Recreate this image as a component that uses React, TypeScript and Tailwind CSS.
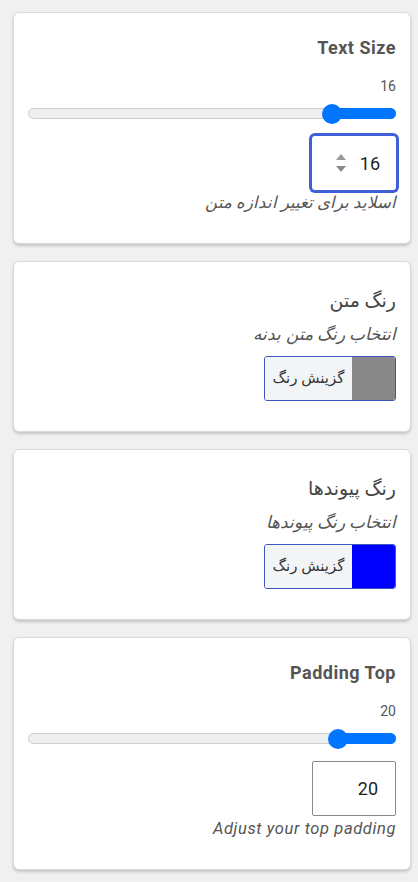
const FONT = { fontFamily: "Roboto, 'DejaVu Sans', sans-serif" };

function Card({ children }: { children: React.ReactNode }) {
  return (
    <div
      dir="rtl"
      className="flex shrink-0 flex-col items-start rounded-md border border-[#d9d9d9] bg-white px-[14px] shadow-[0_2px_3px_rgba(0,0,0,0.18)]"
    >
      {children}
    </div>
  );
}

function Slider({ fromRight }: { fromRight: number }) {
  return (
    <div className="relative h-5 w-full">
      <div className="absolute inset-x-0 top-[4px] h-[11px] rounded-full border border-[#cdcdcd] bg-[#efefef]" />
      <div
        className="absolute right-0 top-[4px] h-[11px] rounded-full bg-[#0075ff]"
        style={{ width: fromRight + 6 }}
      />
      <div
        className="absolute top-0 h-5 w-5 rounded-full bg-[#0075ff]"
        style={{ right: fromRight - 10 }}
      />
    </div>
  );
}

function SliderCard({
  title,
  value,
  fromRight,
  hint,
  focused,
}: {
  title: string;
  value: number;
  fromRight: number;
  hint: string;
  focused?: boolean;
}) {
  return (
    <Card>
      <div className="mt-[24px] text-[18px] leading-[22px] font-bold tracking-[0.5px] text-[#555]">{title}</div>
      <div className="mt-[19px] text-[14px] leading-4 text-[#555]">{value}</div>
      <div className="mt-[10px] w-full">
        <Slider fromRight={fromRight} />
      </div>
      <div
        dir="ltr"
        className={
          focused
            ? 'mt-[12px] flex h-[54px] w-[84px] items-center justify-end gap-[14px] self-start rounded-[3px] pr-[16px] ring-[3px] ring-[#3f5fd8]'
            : 'mt-[12px] flex h-[55px] w-[84px] items-center justify-end self-start rounded-[2px] border border-[#8a8a8a] pr-[17px]'
        }
      >
        {focused && (
          <div className="flex flex-col items-center gap-[6px]">
            <div className="h-0 w-0 border-x-[5px] border-b-[6px] border-x-transparent border-b-[#9a9a9a]" />
            <div className="h-0 w-0 border-x-[5px] border-t-[6px] border-x-transparent border-t-[#8a8a8a]" />
          </div>
        )}
        <span className="text-[18px] text-[#1e1e1e]">{value}</span>
      </div>
      <div className="mt-[1px] mb-[28px] text-[16.5px] leading-6 italic tracking-[0.6px] text-[#555]">{hint}</div>
    </Card>
  );
}

function ColorCard({ title, hint, swatch }: { title: string; hint: string; swatch: string }) {
  return (
    <Card>
      <div className="mt-[25px] text-[19px] leading-[28px] text-[#444]">{title}</div>
      <div className="mt-[6px] text-[17px] leading-[26px] italic text-[#555]">{hint}</div>
      <div className="mt-[9px] mb-[30px] flex h-[45px] w-[132px] overflow-hidden rounded-[3px] border border-[#3d55c0]">
        <div className="w-[43px]" style={{ backgroundColor: swatch }} />
        <div className="flex flex-1 items-center justify-center bg-[#f3f4f5] text-[15px] text-[#333]">گزینش رنگ</div>
      </div>
    </Card>
  );
}

export default function App() {
  return (
    <div style={FONT} className="flex h-screen flex-col gap-[17px] overflow-hidden bg-[#f0f0f0] pl-[13px] pr-[7px] pt-3">
      <SliderCard title="Text Size" value={16} fromRight={64} hint="اسلاید برای تغییر اندازه متن" focused />
      <ColorCard title="رنگ متن" hint="انتخاب رنگ متن بدنه" swatch="#888888" />
      <ColorCard title="رنگ پیوندها" hint="انتخاب رنگ پیوندها" swatch="#0000ff" />
      <SliderCard title="Padding Top" value={20} fromRight={58} hint="Adjust your top padding" />
    </div>
  );
}
